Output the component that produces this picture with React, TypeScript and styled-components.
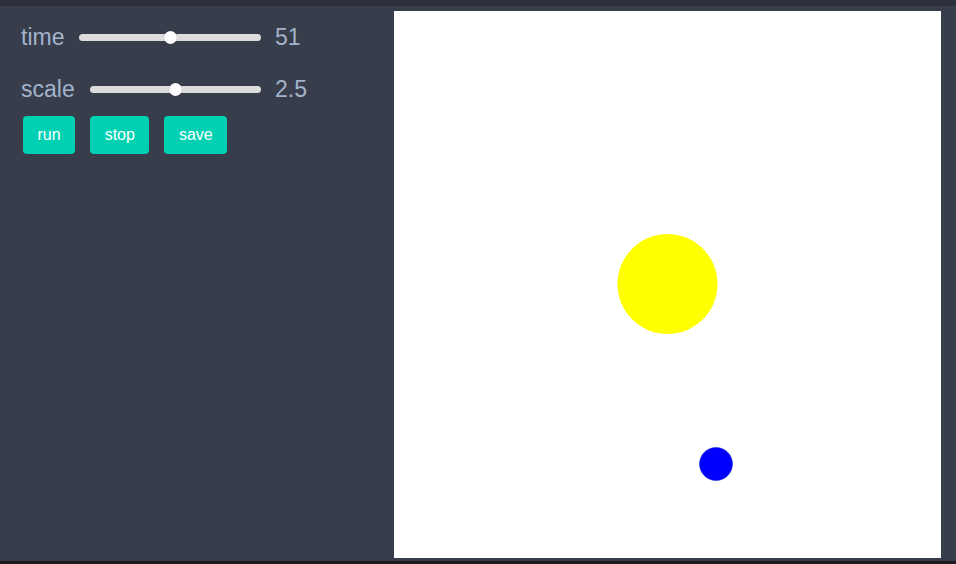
import React, { useState } from 'react'
import styled, { createGlobalStyle } from 'styled-components'

const GlobalStyle = createGlobalStyle`
  html, body {
    margin: 0;
    padding: 0;
    background: #1c1c1f;
  }
  body {
    font-family: 'Liberation Sans', Arial, sans-serif;
  }
`

const Page = styled.div`
  width: 956px;
  height: 564px;
  display: flex;
  flex-direction: column;
  overflow: hidden;
`

const TopBar = styled.div`
  height: 6px;
  background: #2a2f3b;
`

const Main = styled.div`
  height: 555px;
  display: flex;
  background: #373d4a;
`

const BottomBar = styled.div`
  height: 3px;
  background: #1c1c1f;
`

const Sidebar = styled.div`
  width: 394px;
  padding: 16px 0 0 21px;
  box-sizing: border-box;
  display: flex;
  flex-direction: column;
`

const ControlRow = styled.div`
  width: 294px;
  height: 30px;
  display: flex;
  align-items: center;
  margin-bottom: 22px;
`

const Label = styled.span`
  font-size: 23px;
  color: #a3b3cc;
  line-height: 30px;
`

const Track = styled.div`
  position: relative;
  flex: 1;
  height: 7px;
  margin-left: 15px;
  border-radius: 4px;
  background: #dcdcdc;
`

const Thumb = styled.div`
  position: absolute;
  top: 50%;
  width: 13px;
  height: 13px;
  margin-top: -6.5px;
  margin-left: -6.5px;
  border-radius: 50%;
  background: #ffffff;
  box-shadow: 0 0 1px rgba(0, 0, 0, 0.4);
`

const Value = styled.span`
  width: 40px;
  margin-left: 14px;
  font-size: 23px;
  color: #a3b3cc;
  line-height: 30px;
`

const ButtonRow = styled.div`
  display: flex;
  gap: 15px;
  margin: -10px 0 0 2px;
`

const Button = styled.button`
  height: 38px;
  padding: 0 14.5px;
  border: none;
  border-radius: 4px;
  background: #00d1b2;
  color: #ffffff;
  font-family: 'Liberation Sans', Arial, sans-serif;
  font-size: 16px;
  cursor: pointer;
`

const CanvasWrap = styled.div`
  padding-top: 5px;
`

const Canvas = styled.svg`
  display: block;
  width: 547px;
  height: 547px;
  background: #ffffff;
`

type SliderProps = {
  label: string
  value: number
  min: number
  max: number
  display: string
}

const Slider: React.FC<SliderProps> = ({ label, value, min, max, display }) => {
  const ratio = (value - min) / (max - min)
  return (
    <ControlRow>
      <Label>{label}</Label>
      <Track>
        <Thumb style={{ left: `calc(6.5px + (100% - 13px) * ${ratio})` }} />
      </Track>
      <Value>{display}</Value>
    </ControlRow>
  )
}

const App: React.FC = () => {
  const [time] = useState(50)
  const [scale] = useState(2.5)

  return (
    <Page>
      <GlobalStyle />
      <TopBar />
      <Main>
        <Sidebar>
          <Slider label="time" value={time} min={0} max={100} display="51" />
          <Slider label="scale" value={scale} min={0} max={5} display={scale.toFixed(1)} />
          <ButtonRow>
            <Button>run</Button>
            <Button>stop</Button>
            <Button>save</Button>
          </ButtonRow>
        </Sidebar>
        <CanvasWrap>
          <Canvas viewBox="0 0 547 547">
            <circle cx={273.5} cy={273} r={50} fill="#ffff00" />
            <circle cx={322} cy={453} r={16.5} fill="#0000ff" stroke="#2a2ad0" strokeWidth={0.6} />
          </Canvas>
        </CanvasWrap>
      </Main>
      <BottomBar />
    </Page>
  )
}

export default App
